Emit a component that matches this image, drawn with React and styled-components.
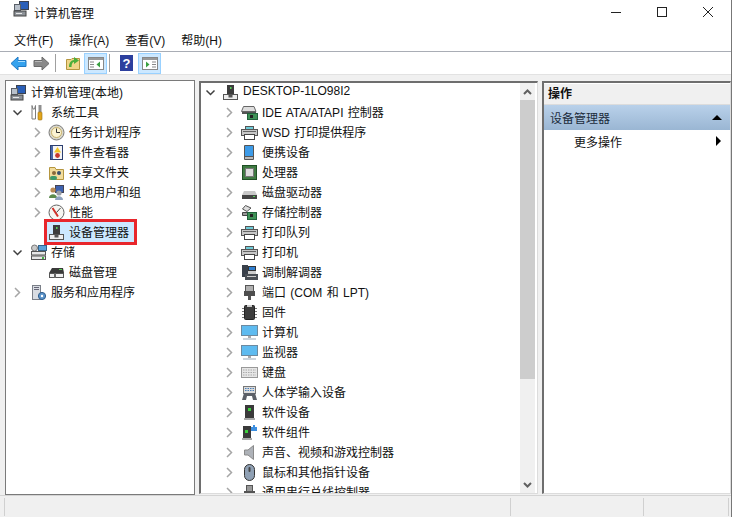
import React from 'react';
import styled, { createGlobalStyle } from 'styled-components';

const Global = createGlobalStyle`
  html, body { margin: 0; padding: 0; background: #fff; }
  body { font-family: "Liberation Sans", "Noto Sans CJK SC", sans-serif; font-size: 12px; color: #111; word-spacing: 1px; }
`;

const Window = styled.div`
  width: 732px;
  height: 517px;
  display: flex;
  flex-direction: column;
  border-right: 1px solid #777;
  box-sizing: border-box;
  background: #f0f0f0;
  overflow: hidden;
`;

const TitleBar = styled.div`
  height: 26px;
  display: flex;
  align-items: flex-start;
  background: #fff;
  padding-left: 13px;
`;

const TitleText = styled.span`
  flex: 1;
  margin-left: 4px;
  line-height: 28px;
`;

const WinButton = styled.div`
  width: 46px;
  height: 24px;
  display: flex;
  align-items: center;
  justify-content: center;
`;

const MenuBar = styled.div`
  height: 25px;
  box-sizing: content-box;
  display: flex;
  align-items: center;
  background: #fff;
  padding-left: 14px;
  gap: 16px;
  border-bottom: 1px solid #a9adb5;
`;

const MenuItem = styled.span`
  padding-top: 1px;
`;

const ToolBar = styled.div`
  height: 22px;
  display: flex;
  align-items: center;
  background: #fff;
  padding-left: 7px;
  border-bottom: 1px solid #e2e2e2;
`;

const ToolIcon = styled.div`
  width: 23px;
  height: 21px;
  display: flex;
  align-items: center;
  justify-content: center;
  box-sizing: border-box;
  ${(p) => p.$active && 'background: #cce8ff; border: 1px solid #99d1ff;'}
`;

const ToolSep = styled.div`
  width: 1px;
  height: 18px;
  background: #a0a0a0;
  margin: 0 5px 0 2px;
`;

const Panes = styled.div`
  flex: 1;
  display: flex;
  gap: 4px;
  padding: 5px 0 0 5px;
  min-height: 0;
`;

const TreePane = styled.div`
  width: 190px;
  background: #fff;
  border: 1px solid #7a7a7a;
  box-sizing: border-box;
  padding-top: 1px;
  overflow: hidden;
`;

const Pane = styled.div`
  width: ${(p) => p.$w}px;
  margin: 1px 0;
  background: #fff;
  border: 1px solid #dcdcdc;
  border-top: 2px solid #6e6e6e;
  border-left: 2px solid #6e6e6e;
  box-sizing: border-box;
  display: flex;
  min-height: 0;
  overflow: hidden;
`;

const TreeList = styled.div`
  flex: 1;
  margin-top: -1px;
  min-width: 0;
  overflow: hidden;
`;

const Row = styled.div`
  height: 20px;
  display: flex;
  align-items: center;
  padding-left: ${(p) => p.$indent}px;
  white-space: nowrap;
`;

const Label = styled.span`
  margin-bottom: 2px;
`;

const Arrow = styled.div`
  width: 11px;
  height: 11px;
  display: flex;
  align-items: center;
  justify-content: center;
  margin-right: ${(p) => p.$gap}px;
  flex-shrink: 0;
`;

const IconBox = styled.div`
  width: 17px;
  height: 17px;
  margin-right: ${(p) => p.$gap}px;
  flex-shrink: 0;
  display: flex;
  align-items: center;
  justify-content: center;
`;

const Selected = styled.div`
  display: flex;
  align-items: center;
  width: 93px;
  height: 26px;
  margin: -3px 0 -3px -4px;
  padding-left: 1px;
  box-sizing: border-box;
  background: #cce8ff;
  border: 3px solid #e8262c;
`;

const ScrollBar = styled.div`
  width: 15px;
  background: #f0f0f0;
  display: flex;
  flex-direction: column;
  flex-shrink: 0;
  margin-right: 2px;
`;

const ScrollButton = styled.div`
  height: 17px;
  display: flex;
  align-items: center;
  justify-content: center;
  flex-shrink: 0;
`;

const ScrollThumb = styled.div`
  height: 279px;
  background: #cdcdcd;
`;

const ScrollRest = styled.div`
  flex: 1;
`;

const ActionColumn = styled.div`
  flex: 1;
  display: flex;
  flex-direction: column;
`;

const ActionHead = styled.div`
  height: 21px;
  margin-top: 1px;
  box-sizing: border-box;
  display: flex;
  align-items: center;
  padding: 0 0 3px 4px;
  background: #f0f0f0;
  border-bottom: 1px solid #dcdcdc;
  font-weight: bold;
`;

const ActionGroup = styled.div`
  height: 25px;
  box-sizing: border-box;
  display: flex;
  align-items: center;
  justify-content: space-between;
  padding: 0 8px 1px 6px;
  background: linear-gradient(#b9d1ea, #9ab6d3);
  color: #1c2c3c;
`;

const ActionItem = styled.div`
  height: 24px;
  box-sizing: border-box;
  display: flex;
  align-items: center;
  justify-content: space-between;
  padding: 0 9px 2px 30px;
`;

const Triangle = styled.div`
  width: 0;
  height: 0;
  ${(p) =>
    p.$up
      ? 'border-left: 5px solid transparent; border-right: 5px solid transparent; border-bottom: 5px solid #000;'
      : 'border-top: 5px solid transparent; border-bottom: 5px solid transparent; border-left: 5px solid #000;'}
`;

const StatusBar = styled.div`
  height: 22px;
  display: flex;
  padding: 1px 0;
  box-sizing: border-box;
  border-top: 1px solid #d4d4d4;
`;

const StatusCell = styled.div`
  width: ${(p) => p.$w}px;
  box-sizing: border-box;
  margin-top: 1px;
  border-right: 1px solid #d0d0d0;
`;

const Chevron = ({ open }) => (
  <svg width="11" height="11" viewBox="0 0 11 11" fill="none">
    {open ? (
      <path d="M1.5 3.5 L5.5 7.5 L9.5 3.5" stroke="#404040" strokeWidth="1.5" />
    ) : (
      <path d="M3 1 L7.5 5.5 L3 10" stroke="#a6a6a6" strokeWidth="1.5" />
    )}
  </svg>
);

const Svg = ({ children }) => (
  <svg width="17" height="17" viewBox="0 0 17 17">{children}</svg>
);

const icons = {
  computer: (
    <Svg>
      <rect x="6.5" y="1.5" width="9" height="8" fill="#2a5fb8" stroke="#3a4250" />
      <rect x="1.5" y="4.5" width="6" height="6" fill="#b8c0ca" stroke="#5a6068" />
      <rect x="1" y="11" width="12" height="5" fill="#8d9298" stroke="#444" />
      <rect x="3" y="13" width="6" height="1" fill="#e8e8e8" />
    </Svg>
  ),
  tools: (
    <Svg>
      <path d="M2 1.5 V15 H5.5 V1.5 L4.5 5 H3 Z" fill="#fff" stroke="#7d7d7d" />
      <rect x="8.5" y="1" width="3" height="7" fill="#8f8f8f" />
      <rect x="8" y="8" width="4" height="8" rx="1" fill="#e2a51c" stroke="#9a6e10" strokeWidth="0.6" />
    </Svg>
  ),
  clock: (
    <Svg>
      <circle cx="8.5" cy="8.5" r="7.5" fill="#d9d6c8" stroke="#7c7c7c" />
      <circle cx="8.5" cy="8.5" r="5" fill="#fbf3d2" stroke="#c9b26a" />
      <path d="M8.5 4.5 V8.5 H12" stroke="#333" fill="none" />
    </Svg>
  ),
  event: (
    <Svg>
      <rect x="2.5" y="1.5" width="12" height="14" fill="#4a68a8" stroke="#2c3f70" />
      <rect x="5" y="2" width="9" height="13" fill="#f4f4f4" />
      <path d="M9.5 3 L13 8.5 H6 Z" fill="#f3c623" />
      <circle cx="9.5" cy="11.5" r="2.4" fill="#c8382e" />
    </Svg>
  ),
  share: (
    <Svg>
      <path d="M1.5 3.5 H7 L8 5.5 H15.5 V15.5 H1.5 Z" fill="#f2dc9c" stroke="#b5963f" />
      <circle cx="6" cy="9" r="2" fill="#8a6a3a" />
      <circle cx="11" cy="9" r="2" fill="#37506e" />
      <rect x="2" y="12" width="7" height="4" rx="2" fill="#3d9a6a" />
    </Svg>
  ),
  users: (
    <Svg>
      <rect x="7.5" y="1.5" width="8" height="7" fill="#3d62b0" stroke="#445" />
      <circle cx="11" cy="9" r="2.6" fill="#9a9fa8" />
      <circle cx="5" cy="6" r="2.6" fill="#b98a55" />
      <path d="M1 14 C1 9 9 9 9 14 Z" fill="#5c8a4c" />
      <path d="M7 16 C7 11 15 11 15 16 Z" fill="#8fa3bf" />
    </Svg>
  ),
  perf: (
    <Svg>
      <circle cx="8.5" cy="8.5" r="7.5" fill="#f6f6f2" stroke="#666" />
      <path d="M4.5 4 L10 12.5" stroke="#d2322a" strokeWidth="2" />
      <path d="M12.5 4 L8.5 8.5" stroke="#444" />
    </Svg>
  ),
  device: (
    <Svg>
      <rect x="5" y="1" width="7" height="9" fill="#3c3c3c" />
      <rect x="8" y="3" width="1.5" height="2" fill="#58d058" />
      <rect x="1.5" y="10.5" width="14" height="5" fill="#eee" stroke="#555" />
      <rect x="6.5" y="10" width="4" height="3.5" fill="#555" />
    </Svg>
  ),
  storage: (
    <Svg>
      <circle cx="4.5" cy="4" r="3" fill="#c9c9c9" stroke="#777" />
      <rect x="8.5" y="1.5" width="8" height="5" fill="#5aa0d8" stroke="#36648c" />
      <rect x="1.5" y="7.5" width="14" height="3.5" fill="#e8e8e8" stroke="#555" />
      <rect x="1.5" y="12" width="14" height="3.5" fill="#e8e8e8" stroke="#555" />
      <rect x="12" y="13" width="2" height="2" fill="#45b045" />
    </Svg>
  ),
  disk: (
    <Svg>
      <path d="M4 4 H15 L16 9 H1 Z" fill="#3a3a3a" />
      <rect x="11" y="5" width="3" height="1" fill="#58d058" />
      <rect x="1.5" y="9.5" width="14" height="4" fill="#f0f0f0" stroke="#555" />
      <rect x="6" y="9" width="2" height="5" fill="#666" />
    </Svg>
  ),
  services: (
    <Svg>
      <rect x="2.5" y="1.5" width="8" height="14" fill="#d8dce2" stroke="#7a7f88" />
      <rect x="4" y="3" width="5" height="1" fill="#667" />
      <rect x="4" y="5" width="5" height="1" fill="#667" />
      <circle cx="12" cy="12" r="3.6" fill="#5b93c9" stroke="#2f5c8c" />
      <circle cx="12" cy="12" r="1.2" fill="#fff" />
    </Svg>
  ),
  ide: (
    <Svg>
      <path d="M2.5 2.5 H13 L15 7.5 H0.5 Z" fill="#ddd" stroke="#666" />
      <rect x="1" y="8" width="14" height="2" fill="#555" />
      <rect x="6.5" y="9.5" width="10" height="6" fill="#3e9156" stroke="#20603a" />
      <rect x="9" y="11" width="3" height="3" fill="#222" />
    </Svg>
  ),
  printer: (
    <Svg>
      <rect x="4.5" y="2.5" width="8" height="3" fill="#6ecbd8" stroke="#555" />
      <rect x="0.5" y="5.5" width="16" height="6" fill="#c8c8c8" stroke="#555" />
      <rect x="3.5" y="10.5" width="10" height="5" fill="#fff" stroke="#444" />
      <rect x="2" y="7" width="13" height="1" fill="#666" />
    </Svg>
  ),
  portable: (
    <Svg>
      <rect x="3" y="1" width="10" height="15" rx="1" fill="#555" />
      <rect x="4" y="2" width="8" height="10" fill="#3d9be8" />
      <rect x="4" y="13" width="8" height="2" fill="#bbb" />
    </Svg>
  ),
  cpu: (
    <Svg>
      <rect x="1.5" y="1.5" width="14" height="14" fill="#3f7a42" stroke="#1f4f24" />
      <rect x="4.5" y="4.5" width="8" height="8" fill="#dedede" stroke="#777" />
    </Svg>
  ),
  drive: (
    <Svg>
      <path d="M3 7 H14 L16 11 H1 Z" fill="#c8c8c8" />
      <rect x="1" y="11" width="15" height="4" fill="#444" />
      <rect x="12" y="12" width="2" height="1" fill="#58d058" />
    </Svg>
  ),
  storageCtl: (
    <Svg>
      <path d="M4.5 1.5 L10 4 L6 7.5 L1.5 5 Z" fill="#ddd" stroke="#555" />
      <path d="M1.5 8.5 H7 V11.5 H1.5 Z" fill="#999" stroke="#444" />
      <rect x="6.5" y="8.5" width="9" height="7" fill="#3e9156" stroke="#20603a" />
      <rect x="9" y="10" width="3" height="3" fill="#222" />
    </Svg>
  ),
  modem: (
    <Svg>
      <rect x="1" y="1" width="6" height="12" fill="#39404a" />
      <rect x="7.5" y="2.5" width="7" height="4" fill="#2f7fd0" stroke="#333" />
      <rect x="7" y="7" width="8" height="3" fill="#ccc" />
      <rect x="4" y="10" width="13" height="6" fill="#4a4f55" />
      <rect x="6" y="12" width="9" height="1" fill="#ccc" />
    </Svg>
  ),
  port: (
    <Svg>
      <rect x="4.5" y="1.5" width="8" height="6" fill="#b0b0b0" stroke="#555" />
      <rect x="3" y="7" width="11" height="5" fill="#4e4e4e" />
      <rect x="7" y="12" width="3" height="4" fill="#555" />
    </Svg>
  ),
  firmware: (
    <Svg>
      <rect x="3.5" y="1.5" width="10" height="14" rx="1" fill="#3c3c3c" stroke="#222" />
      <path d="M1 4.5 H3 M1 7.5 H3 M1 10.5 H3 M1 13.5 H3 M14 4.5 H16 M14 7.5 H16 M14 10.5 H16 M14 13.5 H16" stroke="#777" />
      <rect x="6" y="1" width="5" height="2" fill="#ccc" />
    </Svg>
  ),
  monitor: (
    <Svg>
      <rect x="0.5" y="1.5" width="16" height="10" fill="#5ebbf0" stroke="#6c8aa0" />
      <rect x="7" y="12" width="3" height="2" fill="#aaa" />
      <rect x="2" y="14" width="13" height="2" fill="#ccd4dc" />
    </Svg>
  ),
  keyboard: (
    <Svg>
      <rect x="0.5" y="3.5" width="16" height="10" fill="#e6e6e6" stroke="#999" />
      <path d="M2 6 H15 M2 8.5 H15 M2 11 H15" stroke="#aaa" strokeDasharray="1.5 1" />
    </Svg>
  ),
  hid: (
    <Svg>
      <rect x="2.5" y="2.5" width="12" height="7" fill="#dcdcdc" stroke="#777" />
      <path d="M4 4.5 H13 M4 6.5 H13" stroke="#4a7fb8" strokeDasharray="1.5 1" />
      <path d="M3 9 H14 L16 16 H12 L11 12 H6 L5 16 H1 Z" fill="#5c6068" />
    </Svg>
  ),
  softDevice: (
    <Svg>
      <rect x="4" y="1" width="9" height="13" fill="#3a3a3a" />
      <rect x="7" y="4" width="3" height="3" fill="#3dd03d" />
      <rect x="3" y="14" width="11" height="2" fill="#aaa" />
    </Svg>
  ),
  softPart: (
    <Svg>
      <rect x="2" y="2" width="8" height="12" fill="#3a3a3a" />
      <rect x="4" y="6" width="3" height="3" fill="#3dd03d" />
      <rect x="1" y="14" width="10" height="2" fill="#aaa" />
      <path d="M12 1 H14 V3 H16 V7 H10 V3 H12 Z" fill="#3d8fe0" />
    </Svg>
  ),
  sound: (
    <Svg>
      <path d="M3.5 6 H7 L12.5 1.5 V15.5 L7 11 H3.5 Z" fill="#aeb2b8" stroke="#8a8a8a" />
    </Svg>
  ),
  mouse: (
    <Svg>
      <rect x="3.5" y="0.5" width="10" height="16" rx="5" fill="#8fa0b4" stroke="#333" />
      <rect x="7.5" y="3" width="2" height="5" rx="1" fill="#444" />
    </Svg>
  ),
  usb: (
    <Svg>
      <rect x="5.5" y="1.5" width="6" height="6" fill="#999" stroke="#555" />
      <rect x="3" y="7" width="11" height="9" fill="#555" />
    </Svg>
  ),
};

const treeRows = [
  { level: 0, icon: 'computer', label: '计算机管理(本地)' },
  { level: 1, open: true, icon: 'tools', label: '系统工具' },
  { level: 2, icon: 'clock', label: '任务计划程序' },
  { level: 2, icon: 'event', label: '事件查看器' },
  { level: 2, icon: 'share', label: '共享文件夹' },
  { level: 2, icon: 'users', label: '本地用户和组' },
  { level: 2, icon: 'perf', label: '性能' },
  { level: 2, leaf: true, selected: true, icon: 'device', label: '设备管理器' },
  { level: 1, open: true, icon: 'storage', label: '存储' },
  { level: 2, leaf: true, icon: 'disk', label: '磁盘管理' },
  { level: 1, icon: 'services', label: '服务和应用程序' },
];

const deviceRows = [
  ['ide', 'IDE ATA/ATAPI 控制器'],
  ['printer', 'WSD 打印提供程序'],
  ['portable', '便携设备'],
  ['cpu', '处理器'],
  ['drive', '磁盘驱动器'],
  ['storageCtl', '存储控制器'],
  ['printer', '打印队列'],
  ['printer', '打印机'],
  ['modem', '调制解调器'],
  ['port', '端口 (COM 和 LPT)'],
  ['firmware', '固件'],
  ['monitor', '计算机'],
  ['monitor', '监视器'],
  ['keyboard', '键盘'],
  ['hid', '人体学输入设备'],
  ['softDevice', '软件设备'],
  ['softPart', '软件组件'],
  ['sound', '声音、视频和游戏控制器'],
  ['mouse', '鼠标和其他指针设备'],
  ['usb', '通用串行总线控制器'],
];

const TreeRow = ({ row }) => {
  const icon = <IconBox $gap={4}>{icons[row.icon]}</IconBox>;
  if (row.level === 0) {
    return (
      <Row $indent={4}>
        {icon}
        <Label>{row.label}</Label>
      </Row>
    );
  }
  return (
    <Row $indent={row.level === 1 ? 6 : 26}>
      <Arrow $gap={row.level === 1 ? 7 : 5}>{!row.leaf && <Chevron open={row.open} />}</Arrow>
      {row.selected ? (
        <Selected>
          {icon}
          <Label>{row.label}</Label>
        </Selected>
      ) : (
        <>
          {icon}
          <Label>{row.label}</Label>
        </>
      )}
    </Row>
  );
};

const App = () => (
  <>
    <Global />
    <Window>
      <TitleBar>
        <IconBox $gap={0}>{icons.computer}</IconBox>
        <TitleText>计算机管理</TitleText>
        <WinButton>
          <svg width="10" height="10" viewBox="0 0 10 10"><path d="M0 5.5 H10" stroke="#222" /></svg>
        </WinButton>
        <WinButton>
          <svg width="10" height="10" viewBox="0 0 10 10"><rect x="0.5" y="0.5" width="9" height="9" fill="none" stroke="#222" /></svg>
        </WinButton>
        <WinButton>
          <svg width="10" height="10" viewBox="0 0 10 10"><path d="M0 0 L10 10 M10 0 L0 10" stroke="#222" /></svg>
        </WinButton>
      </TitleBar>
      <MenuBar>
        <MenuItem>文件(F)</MenuItem>
        <MenuItem>操作(A)</MenuItem>
        <MenuItem>查看(V)</MenuItem>
        <MenuItem>帮助(H)</MenuItem>
      </MenuBar>
      <ToolBar>
        <ToolIcon>
          <svg width="17" height="15" viewBox="0 0 17 15"><path d="M1 7.5 L8 1 V4.5 H16 V10.5 H8 V14 Z" fill="#35a2ee" stroke="#1f78c4" /><path d="M8 5.5 H15" stroke="#a5dcff" /></svg>
        </ToolIcon>
        <ToolIcon>
          <svg width="17" height="15" viewBox="0 0 17 15"><path d="M16 7.5 L9 1 V4.5 H1 V10.5 H9 V14 Z" fill="#8a8a8a" stroke="#6a6a6a" /><path d="M2 5.5 H9" stroke="#b8b8b8" /></svg>
        </ToolIcon>
        <ToolSep />
        <ToolIcon>
          <svg width="16" height="16" viewBox="0 0 16 16">
            <path d="M1.5 4.5 H6 L7 3.5 H14.5 V14.5 H1.5 Z" fill="#f0d68a" stroke="#b5963f" />
            <path d="M4 12 C4 8 6 5 9 5 V2 L14 5.5 L9 9 V7 C7.5 7 6.5 9 6.5 12 Z" fill="#4caf3c" />
          </svg>
        </ToolIcon>
        <ToolIcon $active>
          <svg width="16" height="13" viewBox="0 0 16 13">
            <rect x="0.5" y="0.5" width="15" height="12" fill="#fff" stroke="#888" />
            <rect x="1" y="1" width="14" height="2" fill="#999" />
            <path d="M2 5 H6 M2 7.5 H6 M2 10 H6" stroke="#888" />
            <path d="M12 4.5 L8.5 7.5 L12 10.5 Z" fill="#3aa040" />
          </svg>
        </ToolIcon>
        <ToolSep />
        <ToolIcon>
          <svg width="13" height="16" viewBox="0 0 13 16">
            <rect width="13" height="16" fill="#2c3f9e" />
            <text x="6.5" y="13" fontSize="13" fontWeight="bold" fill="#fff" textAnchor="middle" fontFamily="Liberation Sans">?</text>
          </svg>
        </ToolIcon>
        <ToolIcon $active>
          <svg width="16" height="13" viewBox="0 0 16 13">
            <rect x="0.5" y="0.5" width="15" height="12" fill="#fff" stroke="#888" />
            <rect x="1" y="1" width="14" height="2" fill="#999" />
            <path d="M10 5 H14 M10 7.5 H14 M10 10 H14" stroke="#888" />
            <path d="M4 4.5 L7.5 7.5 L4 10.5 Z" fill="#3aa040" />
          </svg>
        </ToolIcon>
      </ToolBar>
      <Panes>
        <TreePane>
          {treeRows.map((row) => (
            <TreeRow key={row.label} row={row} />
          ))}
        </TreePane>
        <Pane $w={339}>
          <TreeList>
            <Row $indent={4}>
              <Arrow $gap={6}><Chevron open /></Arrow>
              <IconBox $gap={4}>{icons.device}</IconBox>
              <Label>DESKTOP-1LO98I2</Label>
            </Row>
            {deviceRows.map(([icon, label]) => (
              <Row key={label} $indent={23}>
                <Arrow $gap={6}><Chevron /></Arrow>
                <IconBox $gap={4}>{icons[icon]}</IconBox>
                <Label>{label}</Label>
              </Row>
            ))}
          </TreeList>
          <ScrollBar>
            <ScrollButton>
              <svg width="9" height="6" viewBox="0 0 9 6"><path d="M1 5 L4.5 1.5 L8 5" fill="none" stroke="#606060" strokeWidth="2" /></svg>
            </ScrollButton>
            <ScrollThumb />
            <ScrollRest />
            <ScrollButton>
              <svg width="9" height="6" viewBox="0 0 9 6"><path d="M1 1 L4.5 4.5 L8 1" fill="none" stroke="#606060" strokeWidth="2" /></svg>
            </ScrollButton>
          </ScrollBar>
        </Pane>
        <Pane $w={189}>
          <ActionColumn>
            <ActionHead>操作</ActionHead>
            <ActionGroup>设备管理器<Triangle $up /></ActionGroup>
            <ActionItem>更多操作<Triangle /></ActionItem>
          </ActionColumn>
        </Pane>
      </Panes>
      <StatusBar>
        <StatusCell $w={5} />
        <StatusCell $w={506} />
        <StatusCell $w={133} />
        <StatusCell $w={85} />
      </StatusBar>
    </Window>
  </>
);

export default App;
